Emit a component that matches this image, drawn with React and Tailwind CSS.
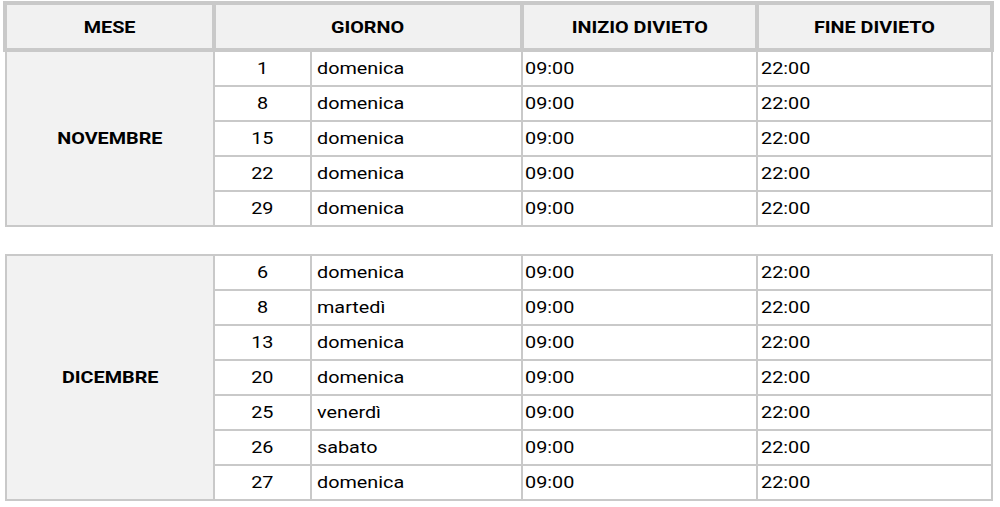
import React from "react";

const nov = [
  ["1", "domenica"],
  ["8", "domenica"],
  ["15", "domenica"],
  ["22", "domenica"],
  ["29", "domenica"],
];
const dic = [
  ["6", "domenica"],
  ["8", "martedì"],
  ["13", "domenica"],
  ["20", "domenica"],
  ["25", "venerdì"],
  ["26", "sabato"],
  ["27", "domenica"],
];

function S({ children, origin = "origin-left" }) {
  return (
    <span className={`inline-block scale-x-[1.2] ${origin}`}>{children}</span>
  );
}

function Block({ month, rows, top }) {
  return (
    <div
      className={`ml-[2px] w-[988px] grid grid-cols-[206px_95px_209px_233px_233px] auto-rows-[33px] gap-[2px] bg-[#c9c9c9] px-[2px] pb-[2px] ${
        top ? "pt-[2px]" : ""
      }`}
    >
      <div
        className="bg-[#f2f2f2] flex items-center justify-center font-bold text-[16.5px] pt-[1px]"
        style={{ gridRow: `1 / span ${rows.length}` }}
      >
        <S origin="origin-center">{month}</S>
      </div>
      {rows.map(([n, d], i) => (
        <React.Fragment key={i}>
          <div className="bg-white flex items-center justify-center pt-[2px] text-[16.5px]">
            <S origin="origin-center">{n}</S>
          </div>
          <div className="bg-white flex items-center pl-[5px] pt-[2px] text-[16.5px]">
            <S>{d}</S>
          </div>
          <div className="bg-white flex items-center pl-[2px] pt-[2px] text-[16.5px]">
            <S>09:00</S>
          </div>
          <div className="bg-white flex items-center pl-[3px] pt-[2px] text-[16.5px]">
            <S>22:00</S>
          </div>
        </React.Fragment>
      ))}
    </div>
  );
}

export default function App() {
  return (
    <div className="w-[1000px] h-[507px] bg-white font-['Roboto',sans-serif] text-black overflow-hidden">
      <div className="pt-[1px] pl-[3px]">
        <div className="w-[991px] h-[51px] grid grid-cols-[205px_304px_231px_231px] gap-[4px] bg-[#c9c9c9] p-[4px]">
          {["MESE", "GIORNO", "INIZIO DIVIETO", "FINE DIVIETO"].map((h) => (
            <div
              key={h}
              className="bg-[#f1f1f1] flex items-center justify-center font-bold text-[16.5px] pt-[4px]"
            >
              <S origin="origin-center">{h}</S>
            </div>
          ))}
        </div>
        <Block month="NOVEMBRE" rows={nov} />
        <div className="h-[27px]" />
        <Block month="DICEMBRE" rows={dic} top />
      </div>
    </div>
  );
}
